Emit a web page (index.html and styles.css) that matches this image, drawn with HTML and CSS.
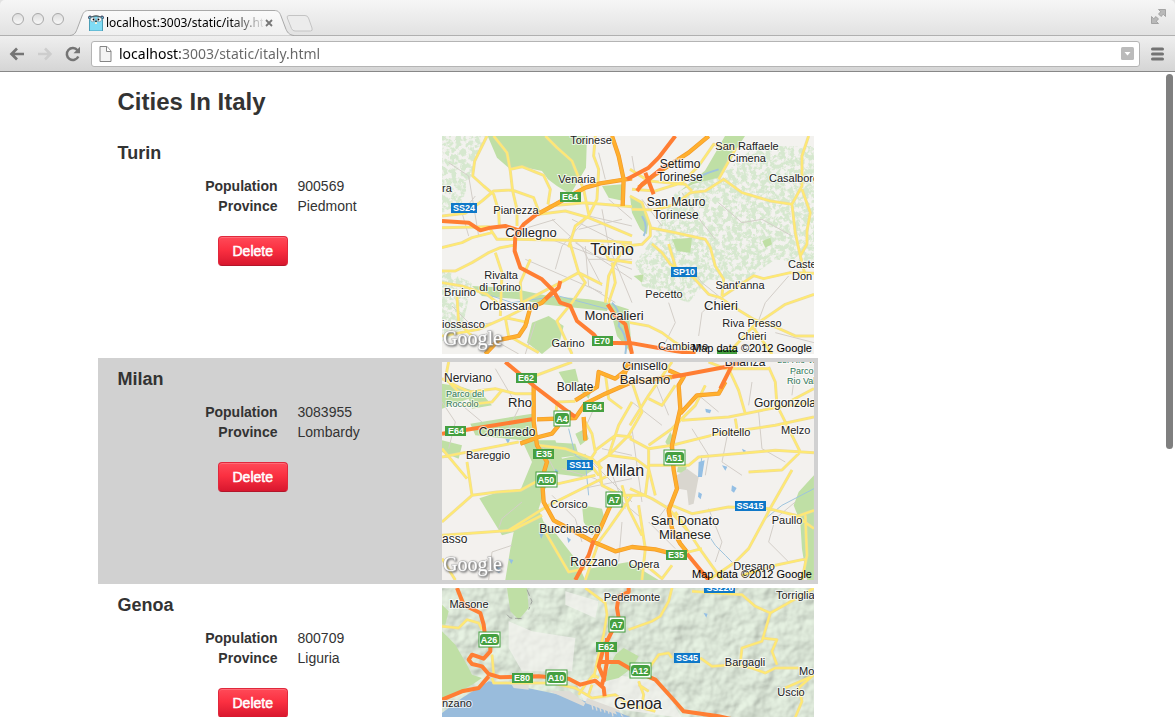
FILE: index.html
```html
<!DOCTYPE html>
<html lang="en">
<head>
<meta charset="utf-8">
<title>Cities In Italy</title>
<link rel="stylesheet" href="styles.css">
</head>
<body>
<header class="browser">
  <div class="tabstrip">
    <div class="lights"><i></i><i></i><i></i></div>
    <div class="tab">
      <svg class="tab-shape" width="224" height="26" viewBox="0 0 224 26"><defs><linearGradient id="tabfill" x2="0" y2="1"><stop offset="0" stop-color="#fafafa"/><stop offset="1" stop-color="#efefef"/></linearGradient></defs><path d="M0 25.5C5 25 6 22 7.500 18L12 6C13.500 2 15 .5 19 .5H204C208 .5 209.500 2 211 6L215.500 18C217 22 219 25 224 25.500" fill="url(#tabfill)" stroke="#a9a9a9"/></svg>
      <div class="tab-body">
        <svg width="16" height="16" viewBox="0 0 16 16"><circle cx="2" cy="2.500" r="1.500" fill="#68c4dc" stroke="#335"/><circle cx="14" cy="2.500" r="1.500" fill="#68c4dc" stroke="#335"/><path d="M1.500 16V5C1.500 0 14.500 0 14.500 5V16Z" fill="#7fdcf5" stroke="#4c9fb8"/><path d="M2 3.500C4 0 12 0 14 3.500" fill="none" stroke="#444"/><circle cx="4.800" cy="4.500" r="2.300" fill="#fff" stroke="#678" stroke-width=".5"/><circle cx="11.200" cy="4.500" r="2.300" fill="#fff" stroke="#678" stroke-width=".5"/><circle cx="5.500" cy="4.500" r=".9"/><circle cx="10.500" cy="4.500" r=".9"/><ellipse cx="8" cy="6.300" rx="1.200" ry=".7" fill="#333"/><path d="M7 7.300H9V9H7Z" fill="#fff0d0"/></svg>
        <span class="tab-title">localhost:3003/static/italy.html</span>
        <button class="icon-button" aria-label="Close tab"><svg width="8" height="8" viewBox="0 0 8 8"><path d="M1 1L7 7M7 1L1 7" stroke="#777" stroke-width="1.800"/></svg></button>
      </div>
    </div>
    <button class="icon-button new-tab" aria-label="New tab"><svg width="28" height="17" viewBox="0 0 28 17"><path d="M3 .5H19Q21.500 .5 22.500 3L26 13Q27 16 24.500 16H9Q6.500 16 5.500 13.500L1.300 3Q.5 .5 3 .5Z" fill="#ececec" stroke="#c4c4c4"/></svg></button>
    <button class="icon-button fullscreen" aria-label="Full screen"><svg width="15" height="15" viewBox="0 0 15 15"><path d="M7.500 .5H14.500V7.500L12.300 5.300L10 7.500L7.500 5L9.700 2.700ZM.5 7.500L2.700 9.700L5 7.500L7.500 10L5.300 12.300L7.500 14.500H.5Z" fill="#b9b9b9" stroke="#8f8f8f" stroke-width=".7"/></svg></button>
  </div>
  <div class="toolbar">
    <button class="icon-button" aria-label="Back"><svg width="16" height="14" viewBox="0 0 16 14"><path d="M15 7H3M8 1.500L2.500 7L8 12.500" fill="none" stroke="#757575" stroke-width="2.700"/></svg></button>
    <button class="icon-button" aria-label="Forward" disabled><svg width="16" height="14" viewBox="0 0 16 14"><path d="M1 7H13M8 1.500L13.500 7L8 12.500" fill="none" stroke="#cdcdcd" stroke-width="2.500"/></svg></button>
    <button class="icon-button" aria-label="Reload"><svg width="16" height="16" viewBox="0 0 16 16"><path d="M13.300 10.500A6 6 0 1 1 12.500 4.200" fill="none" stroke="#757575" stroke-width="2.500"/><path d="M15 .8V7.300H8.500Z" fill="#757575"/></svg></button>
    <div class="omnibox">
      <svg width="13" height="16" viewBox="0 0 13 16"><path d="M1 .5H8L12 5V15.500H1Z" fill="#f3f3f3" stroke="#858585"/><path d="M7.500 .5V5.500H12" fill="#fff" stroke="#858585"/></svg>
      <input class="address" type="text" aria-label="Address" value="localhost:3003/static/italy.html">
      <button class="icon-button" aria-label="Show history"><svg width="13" height="13" viewBox="0 0 13 13"><rect width="13" height="13" rx="1.500" fill="#bbb"/><path d="M3.500 5H9.500L6.500 8.500Z" fill="#fff"/></svg></button>
    </div>
    <button class="icon-button" aria-label="Menu"><svg width="13" height="14" viewBox="0 0 13 14"><path d="M1.500 2H11.500M1.500 7H11.500M1.500 12H11.500" stroke="#737373" stroke-width="3" stroke-linecap="round"/></svg></button>
  </div>
</header>
<main class="viewport">
  <div class="container">
    <h1>Cities In Italy</h1>

    <section class="city">
      <div class="details">
        <h2>Turin</h2>
        <dl><dt>Population</dt><dd>900569</dd><dt>Province</dt><dd>Piedmont</dd></dl>
        <button class="delete">Delete</button>
      </div>
      <svg class="map" viewBox="0 0 372 218" role="img" aria-label="Map of Turin">
        <defs>
          <filter id="hills" x="0" y="0" width="100%" height="100%" color-interpolation-filters="sRGB"><feTurbulence type="fractalNoise" baseFrequency=".07" numOctaves="4" seed="4"/><feColorMatrix values="0 0 0 0 .84  0 0 0 0 .91  0 0 0 0 .81  6 0 0 0 -2.400"/><feComposite in2="SourceGraphic" operator="in"/></filter>
          <filter id="relief" x="0" y="0" width="100%" height="100%" color-interpolation-filters="sRGB"><feTurbulence type="fractalNoise" baseFrequency=".05" numOctaves="3" seed="9"/><feColorMatrix values="0 0 0 0 0  0 0 0 0 0  0 0 0 0 0  1 0 0 0 0"/><feDiffuseLighting surfaceScale="2" diffuseConstant="1.050" lighting-color="#dfeadb"><feDistantLight azimuth="225" elevation="68"/></feDiffuseLighting></filter>
          <path id="turin-roads" d="M135 0L98 75L92 120L125 150L155 175L170 225L172 270M155 0L195 50L205 105L212 165L225 220V270M205 100L240 92L280 108L305 118L325 160L318 205M0 240L70 232L120 195L155 165L210 162L275 185L290 225M310 0L345 35L390 75L400 100L425 160L440 235M0 275L140 272L165 310H220L480 315L570 320M0 335L60 320L90 305L150 290M290 235L370 225L440 245L570 300M320 210L430 200L570 212M460 0L455 60L470 100L465 190L440 240L400 270L380 334M0 405H40L90 380L140 350L175 335L215 328M160 350L180 410L175 540M265 370L235 440L240 520L190 545L200 600L290 650M0 440L60 450L135 475L165 500M45 480L50 560L90 600M240 500L355 440L410 410L480 445M385 324L410 410L430 440L390 500L345 555L390 654M564 180L600 200L625 270V300L600 325L550 330L520 380L500 420L490 500M480 324L500 370L570 380M625 275L700 290L790 310L805 334L820 390L845 430L840 480M1100 0L1080 60V150L1050 205L985 195L900 170L845 130L790 165L745 170L700 205L640 222L570 220M1050 205L1060 290L1075 360L1090 420M1080 160L1105 230L1095 285V324L1075 360M570 160L640 165L720 140L770 90L815 25L880 40L830 130M564 100L620 135L730 145L750 165M630 324L660 350L685 385L755 425L800 475L835 485L870 510L935 550L1005 575L1060 600L1116 600M680 324L700 390M840 482L935 419L965 428L1045 410L1116 412M1116 475L1030 505L935 570L870 640M930 570L990 654M564 560L620 570L660 590L700 620L760 654M0 600L110 580L190 545L260 560M500 500L520 440L510 380M540 324L570 350"/>
          <path id="turin-highways" d="M285 235L340 205L430 155L475 142L570 127M510 0L530 60L545 130L542 210M330 470L300 500L265 515L250 570L230 600L170 612L130 654M800 0L740 50L640 115L590 155"/>
        </defs>
        <rect width="372" height="218" fill="#f3f2ef"/>
        <g transform="scale(.3333)">
          <g filter="url(#hills)"><path d="M700 170L860 100L940 30H1116V390L1000 370L900 440L800 430L740 500L600 450L580 380L630 310Z"/><path d="M0 0H130L90 110L60 200L0 230Z"/><path d="M0 400L90 440L60 580L0 620Z"/></g>
          <g class="park"><path d="M137 0H435L432 95L400 150L385 175L345 150L318 130L300 105L240 92L205 100L165 65Z"/><path d="M480 150L540 145L545 195L500 185Z"/><path d="M849 0H909L874 54L834 124L754 144L714 165L789 104L824 44Z"/><path d="M270 560L320 540L365 570L355 610L300 654L255 620Z"/><path d="M90 450L200 455L320 480L440 490L500 500L495 525L400 515L300 505L230 490L120 480Z"/><path d="M564 180L600 200L620 250L615 295L595 280L570 230ZM500 500L560 520L570 654L525 600Z"/><path d="M690 310L750 305L745 350L705 345ZM961 315L985 305L990 325L970 335ZM575 420L605 415L600 440Z"/></g>
          <path class="grid" d="M330 250L420 334L480 450M300 300L570 400M250 370L480 470M400 320L570 430M480 220L500 330L570 500M390 250L570 340M340 400L360 330L440 240L570 270M470 50L490 130M570 60L580 120M430 330L440 450L520 500M600 190L660 270M100 180L60 230L80 300M20 80L80 120L110 300M240 280L340 250M410 280L540 250M500 190L570 250M440 370L570 370M750 400L780 440L830 480L780 530L770 600M1040 420L970 500L940 580M680 500L700 560L670 620M830 200L900 260L960 250L1050 300M720 170L780 260L820 310M170 620L230 654M30 510L90 570L150 560M280 560L250 654M1000 590L1116 620"/>
          <path class="river" d="M600 240Q620 270 605 300M830 100L800 110L740 135M510 500Q540 530 530 570Q560 600 550 654"/>
          <path class="river thin" d="M0 440L60 450L210 500L350 480L500 520"/>
          <use href="#turin-roads" class="minor-edge"/><use href="#turin-roads" class="minor"/>
          <use href="#turin-highways" class="major-edge"/><use href="#turin-highways" class="major"/>
          <path class="motorway" d="M0 255L80 260L115 283L145 275L190 270L235 285M290 230L245 265L220 300L218 345L235 395L300 430L335 465L355 500L385 510L405 555L455 595L475 620L570 622M355 435L350 455L310 490M555 130L620 95L650 65L700 0M585 165L600 145L650 105L680 85M610 110L635 175M497 505L520 540L550 565L564 625L570 654M560 620L700 645L760 654"/>
        </g>
        <g class="label">
          <text x="149" y="8">Torinese</text><text x="135" y="47">Venaria</text><text class="start" x="0" y="56">ra</text><text x="74" y="78">Pianezza</text><text class="town" x="89" y="101">Collegno</text><text class="capital" x="170" y="119">Torino</text><text x="305" y="14">San Raffaele</text><text x="305" y="26">Cimena</text><text class="village" x="238" y="32">Settimo</text><text class="village" x="238" y="45">Torinese</text><text class="start" x="327" y="46">Casalborgone</text><text class="village" x="234" y="70">San Mauro</text><text class="village" x="234" y="83">Torinese</text><text x="59" y="143">Rivalta</text><text x="58" y="155">di Torino</text><text x="18" y="160">Bruino</text><text class="village" x="67" y="174">Orbassano</text><text class="start" x="0" y="192">iossasco</text><text class="town" x="172" y="184">Moncalieri</text><text x="126" y="211">Garino</text><text x="222" y="162">Pecetto</text><text x="298" y="153">Sant'anna</text><text class="town" x="279" y="174">Chieri</text><text class="start" x="346" y="132">Castelnuovo</text><text class="start" x="350" y="144">Don Bosco</text><text x="310" y="191">Riva Presso</text><text x="310" y="204">Chieri</text><text x="241" y="214">Cambiano</text>
        </g>
        <g class="green"><rect x="118" y="56" width="21" height="10"/><rect x="150" y="200" width="21" height="10"/><rect x="275" y="214" width="20" height="10"/></g>
        <g class="blue"><rect x="9" y="67" width="26" height="10"/><rect x="229" y="131" width="26" height="10"/></g>
        <g class="shield"><text x="128" y="64">E64</text><text x="160" y="208">E70</text><text x="22" y="75">SS24</text><text x="242" y="139">SP10</text></g>
        <text class="google" x="1" y="209">Google</text><text class="credit" x="370" y="216">Map data ©2012 Google</text>
      </svg>
    </section>

    <section class="city alternate">
      <div class="details">
        <h2>Milan</h2>
        <dl><dt>Population</dt><dd>3083955</dd><dt>Province</dt><dd>Lombardy</dd></dl>
        <button class="delete">Delete</button>
      </div>
      <svg class="map" viewBox="0 0 372 218" role="img" aria-label="Map of Milan">
        <defs>
          <path id="milan-roads" d="M0 50L80 90L160 80L220 95L270 95M60 130L150 120L180 85M0 260L75 350M0 285L230 240M290 250L370 260L450 290L480 320M75 300L90 400L0 480M90 400L165 390L235 385L290 355L350 365L460 340M0 520L210 505L300 460M200 505L320 430L460 360L500 340M310 510L380 630L430 620M0 590L40 654M340 180L345 120L400 118M460 265L520 220L570 225M430 180L450 215L460 270L440 300L470 340M490 35L500 110L540 140M470 300L500 280L580 290L620 320L610 400L540 400L480 370ZM564 190L620 100L690 0M570 60L600 150L560 220L500 280M620 250L690 200L760 130L790 70M620 110L660 130L700 70M720 175L860 165L1010 135L1116 120M620 260L690 250L830 215L1000 190L1116 165M620 310H740L770 285L1000 265L1116 272M860 20L890 85L910 155M980 15L1000 60L1005 130L1040 200L1075 270L1020 324L920 330M1116 80L1040 120M880 170L885 200M564 230L620 260V320L640 400M690 430L750 455L860 435L980 440L1060 460L1116 500M1050 324L990 430L920 560L880 600L800 654M564 380L630 410L680 440L740 510M700 450L780 570L840 654M590 430L610 560L600 654M1090 460L1095 580L1080 654M1116 445L1060 465M1095 590L1000 610L900 640M570 400L500 500L470 540L430 654M540 370L560 440L600 520M20 0L10 50L50 90M800 0L850 20L980 20M690 610L660 650L600 600M720 575L780 560M270 45L390 0M500 280L530 190L570 120"/>
          <path id="milan-highways" d="M275 70V180L285 250L315 300L300 350L305 420L335 475L400 510L455 540L520 568L570 555L640 562L690 575L735 575M285 172L400 168L430 125L490 95L570 60L690 45M425 165L430 235M235 245L290 225L330 215L350 190M570 10L520 50L470 30L465 75L400 115M560 0L540 60M715 155L765 100L830 95L850 60M680 25L725 45L710 70L715 140L690 250L695 324L705 380L680 445L690 500L715 545L735 570M510 420L475 500L455 535"/>
        </defs>
        <rect width="372" height="218" fill="#f3f1ee"/>
        <g transform="scale(.3333)">
          <g class="park"><path d="M85 185L270 155V235L340 235L360 290L430 275L460 320L420 345L340 335L310 380L290 440L305 480L330 500L400 590L430 654H190L205 560L215 510L180 520L112 409L170 390L235 385L270 300L240 235L100 220Z"/><path d="M0 65L60 75L120 95L150 130L90 140L80 110L0 140ZM0 235L60 250L50 290L0 270Z"/><path d="M310 240L400 245L410 280L330 290ZM350 30L400 20L410 60L370 65ZM400 215L430 200L440 230L415 250Z"/><path d="M1055 430L1070 390L1116 340V654H1095L1080 560L1075 480Z"/><path d="M420 430L480 440L490 480L450 520L425 480ZM440 620L560 600L650 654H430Z"/><path d="M685 210L700 240L690 270L670 240ZM710 300L735 310L730 335L705 330ZM400 70L450 80L440 110Z"/></g>
          <path d="M705 340L735 320L770 345L755 425L740 430L735 385L710 380Z" fill="#d9d6cf"/>
          <path class="grid" d="M300 250L340 330M360 320L460 350L600 470M420 380L570 350M500 310L550 440M440 290L570 420M330 400L400 470L420 540M480 260L570 280M570 200L600 420M460 130L420 220M0 120L40 180L20 260M160 20L230 140L200 200M570 120L660 190M640 60L680 160M750 200L800 280L790 340M860 200L840 300L900 340M950 150L960 260L1030 300M1060 420L1000 470L980 540L1040 600M800 440L840 540L820 600M700 400L640 480M210 550L150 570L140 654M240 420L180 470L170 500M770 100L830 150M930 60L920 130M1060 20L1050 100M60 130L120 180M540 480L530 600M620 480L700 560"/>
          <path class="river thin" d="M775 324L780 280M800 520L820 550L850 580L870 600M970 470L1020 430L1116 380M380 200L400 280L430 300L440 400"/>
          <g class="pond"><path d="M770 300L788 295L780 345L768 345ZM790 140l18 4l-4 10l-12-3zM870 370l14 8l-8 14l-8-6zM770 390l10 6l-4 16l-8-8zM840 310l16 4l-6 12zM900 260l12 6l-6 10zM290 510l14 6l-6 14zM375 525l12 8l-8 10zM160 610l16 8l-4 16l-12-8zM200 590l14 4l-6 12zM340 320l10 8l-12 8zM190 230l14 2l-6 14z"/></g>
          <use href="#milan-roads" class="minor-edge"/><use href="#milan-roads" class="minor"/>
          <use href="#milan-highways" class="major-edge"/><use href="#milan-highways" class="major"/>
          <path class="motorway" d="M190 0L280 75L365 140L400 165M0 215L270 172M690 45L850 15L900 0M870 10L845 60L835 80M455 535L440 580L400 654M735 575L800 654"/>
        </g>
        <g class="label">
          <text class="village" x="26" y="20">Nerviano</text><text class="town" x="78" y="45">Rho</text><text class="village" x="133" y="29">Bollate</text><text class="village" x="65" y="74">Cornaredo</text><text x="46" y="97">Bareggio</text><text class="capital" x="183" y="114">Milan</text><text class="village" x="203" y="8">Cinisello</text><text class="town" x="203" y="22">Balsamo</text><text class="village" x="303" y="4">Brianza</text><text class="village start" x="312" y="45">Gorgonzola</text><text x="289" y="74">Pioltello</text><text class="start" x="339" y="72">Melzo</text><text x="127" y="146">Corsico</text><text class="village" x="128" y="171">Buccinasco</text><text class="village start" x="0" y="181">asso</text><text class="village" x="152" y="204">Rozzano</text><text x="202" y="206">Opera</text><text class="town" x="243" y="163">San Donato</text><text class="town" x="243" y="177">Milanese</text><text x="345" y="162">Paullo</text><text x="312" y="208">Dresano</text>
          <g class="nature"><text x="4" y="35">Parco del</text><text x="4" y="45">Roccolo</text><text x="335" y="1">del Rio Vallone</text><text x="348" y="12">Parco</text><text x="345" y="22">Rio Vallone</text></g>
        </g>
        <g class="green"><rect x="74" y="11" width="21" height="10"/><rect x="141" y="40" width="21" height="10"/><rect x="3" y="64" width="21" height="10"/><rect x="91" y="87" width="21" height="10"/><rect x="224" y="188" width="21" height="10"/></g>
        <g class="blue"><rect x="125" y="98" width="26" height="10"/><rect x="293" y="139" width="31" height="10"/></g>
        <g class="auto"><rect x="112" y="49" width="16" height="15"/><rect x="222" y="88" width="21" height="15"/><rect x="94" y="110" width="21" height="15"/><rect x="164" y="130" width="16" height="15"/></g>
        <g class="auto-fill"><rect x="113" y="51" width="14" height="11" rx="3"/><rect x="223" y="90" width="19" height="11" rx="3"/><rect x="95" y="112" width="19" height="11" rx="3"/><rect x="165" y="132" width="14" height="11" rx="3"/></g>
        <g class="shield"><text x="84" y="19">E62</text><text x="152" y="48">E64</text><text x="14" y="72">E64</text><text x="102" y="95">E35</text><text x="234" y="196">E35</text><text x="138" y="106">SS11</text><text x="308" y="147">SS415</text><text x="120" y="60">A4</text><text x="232" y="99">A51</text><text x="104" y="121">A50</text><text x="172" y="141">A7</text></g>
        <text class="google" x="1" y="209">Google</text><text class="credit" x="370" y="216">Map data ©2012 Google</text>
      </svg>
    </section>

    <section class="city">
      <div class="details">
        <h2>Genoa</h2>
        <dl><dt>Population</dt><dd>800709</dd><dt>Province</dt><dd>Liguria</dd></dl>
        <button class="delete">Delete</button>
      </div>
      <svg class="map" viewBox="0 0 372 218" role="img" aria-label="Map of Genoa">
        <defs>
          <path id="genoa-roads" d="M0 115L50 120L75 95L110 105L120 125M430 0L490 45L495 80L485 140L470 200L455 270M560 125L630 100L655 85L680 40L690 0M625 235L650 200L680 195L690 210M775 210L810 235L880 230L930 240L970 255L1000 240L1070 240M750 10L900 20L940 55L985 75L1030 50L1116 0M985 75L960 160L900 180L895 225M960 150L1005 155L990 190L1005 230M1116 260L1070 300L1080 340L1060 388M1110 265L1030 300M150 270L155 285L220 285L330 285L400 300L450 330L520 320L560 350L640 370M590 280L605 320L600 350M590 290L620 310M150 200L155 260M410 320L430 290L455 260L470 270M440 320L450 290"/>
        </defs>
        <rect width="372" height="218" fill="#e3ecdf"/>
        <rect width="372" height="218" filter="url(#relief)"/>
        <g transform="scale(.3333)">
          <path d="M200 100L270 130L400 150L390 250L240 250L200 180ZM370 10L470 40L460 90L370 50ZM400 280L520 260L640 280L690 340L720 390L430 350Z" fill="#f3f2f0" opacity=".7"/>
          <g class="park"><path d="M195 0H255L260 60L230 95L205 70ZM0 130L40 170L75 230L90 260L120 270L90 290L0 340ZM520 200L545 180L590 205L570 240L530 270L490 280L500 240ZM0 50L20 70L10 110L0 110Z"/></g>
          <path d="M255 5L270 40L260 65M195 80L205 90L240 92" fill="none" stroke="#888" stroke-width="2" stroke-dasharray="20 8"/>
          <path d="M0 375L60 330L140 280L210 290L400 330L520 370L600 400L640 440L900 520L1116 600V654H0Z" fill="#99bcdc"/>
          <path d="M205 283L260 290V305L215 300ZM320 308L385 310L430 345L425 355ZM435 330L530 365L545 387L430 345Z" fill="#dedcd6"/><path d="M450 350l3 15m8-12l4 15m8-13l4 16m8-13l4 16m8-13l4 16m8-10l4 18" stroke="#dedcd6" stroke-width="4"/>
          <g class="pond"><path d="M785 75l12 2l-4 12zM520 370l15 5l5 15h-10z"/></g>
          <use href="#genoa-roads" class="minor-edge"/><use href="#genoa-roads" class="minor"/>
          <path class="motorway" d="M45 0L65 50L115 75L125 110L130 150L145 165V190L125 212L90 200L80 215L90 228L120 235L140 258L175 268L290 265L380 272L415 290L460 278L485 300L488 325M0 335L60 310L110 300L140 265M560 0V12L530 25L525 60L530 90L505 140L485 180L470 235L485 270L480 290M495 150V220L485 280M475 222H530L570 245L640 275L690 330L725 370L830 385L900 400"/>
        </g>
        <g class="label">
          <text x="27" y="20">Masone</text><text x="190" y="13">Pedemonte</text><text class="start" x="334" y="11">Torriglia</text><text x="303" y="78">Bargagli</text><text class="start" x="357" y="87">Moconesi</text><text x="349" y="108">Uscio</text><text class="start" x="0" y="119">nzano</text><text class="capital" x="196" y="121">Genoa</text>
        </g>
        <g class="green"><rect x="154" y="54" width="21" height="10"/><rect x="70" y="85" width="21" height="10"/></g>
        <g class="blue"><rect x="262" y="-5" width="31" height="10"/><rect x="232" y="65" width="26" height="10"/></g>
        <g class="auto"><rect x="167" y="29" width="16" height="15"/><rect x="37" y="44" width="21" height="15"/><rect x="188" y="75" width="21" height="15"/><rect x="104" y="82" width="21" height="15"/></g>
        <g class="auto-fill"><rect x="168" y="31" width="14" height="11" rx="3"/><rect x="38" y="46" width="19" height="11" rx="3"/><rect x="189" y="77" width="19" height="11" rx="3"/><rect x="105" y="84" width="19" height="11" rx="3"/></g>
        <g class="shield"><text x="164" y="62">E62</text><text x="80" y="93">E80</text><text x="278" y="3">SS226</text><text x="245" y="73">SS45</text><text x="175" y="40">A7</text><text x="47" y="55">A26</text><text x="198" y="86">A12</text><text x="114" y="93">A10</text></g>
      </svg>
    </section>
  </div>
  <div class="scroll-thumb"></div>
</main>
</body>
</html>
```
FILE: styles.css
```css
* { box-sizing: border-box; }
body {
  margin: 0;
  height: 100vh;
  display: flex;
  flex-direction: column;
  overflow: hidden;
  background: #fff;
  color: #333;
  font: 14px/20px "Liberation Sans", Arial, sans-serif;
}
svg { display: block; flex: none; }
.icon-button { padding: 0; border: 0; background: none; flex: none; }

/* Browser window */
.browser { flex: none; background: #e2e2e2; font-family: "Noto Sans", sans-serif; }
.tabstrip {
  height: 36px;
  display: flex;
  align-items: flex-end;
  background: linear-gradient(#f6f6f6, #e2e2e2);
  border-bottom: 1px solid #b0b0b0;
  border-radius: 5px 5px 0 0;
}
.lights { display: flex; gap: 8px; padding: 0 6px 10px 12px; }
.lights i {
  width: 12px;
  height: 12px;
  border: 1px solid #a8a8a8;
  border-radius: 50%;
  background: linear-gradient(#dedede, #f8f8f8);
}
.tab { display: grid; margin-bottom: -1px; }
.tab-shape, .tab-body { grid-area: 1 / 1; }
.tab-body { display: flex; align-items: center; gap: 2px; padding: 0 16px 0 18px; width: 224px; }
.tab-title {
  flex: 1;
  min-width: 0;
  overflow: hidden;
  white-space: nowrap;
  font-size: 12px;
  line-height: 16px;
  color: transparent;
  background: linear-gradient(to right, #000 125px, #0000 160px);
  -webkit-background-clip: text;
  background-clip: text;
}
.tab .icon-button { margin-right: 5px; }
.new-tab { margin: 0 auto 3px -8px; }
.fullscreen { margin: 0 9px 11px 0; }
.toolbar {
  height: 36px;
  display: flex;
  align-items: center;
  gap: 12px;
  padding: 0 11px 0 9px;
  background: linear-gradient(#efefef, #d5d5d5);
  border-bottom: 1px solid #888;
}
.omnibox {
  flex: 1;
  height: 26px;
  display: flex;
  align-items: center;
  gap: 7px;
  padding: 0 5px 0 7px;
  margin-left: -2px;
  margin-right: -1px;
  border: 1px solid #b4b4b4;
  border-radius: 3px;
  background: #fff;
}
.address {
  flex: 1;
  min-width: 0;
  padding: 0;
  border: 0;
  outline: 0;
  font: 14px/20px "Noto Sans", sans-serif;
  color: transparent;
  background: linear-gradient(to right, #000 61px, #666 61px);
  -webkit-background-clip: text;
  background-clip: text;
}

/* Page */
.viewport { position: relative; flex: 1; min-height: 0; overflow: hidden; }
.scroll-thumb {
  position: absolute;
  top: 2px;
  right: 2px;
  width: 7px;
  height: 375px;
  border-radius: 4px;
  background: #7f7f7f;
}
.container { max-width: 940px; margin: 0 auto; }
h1 { margin: 0; font-size: 24px; line-height: 60px; }
.city {
  display: flex;
  justify-content: space-between;
  max-width: 720px;
  margin-left: -20px;
  padding: 4px 4px 4px 20px;
}
.alternate { background: #d1d1d1; }
h2 { margin: 0 0 6px; font-size: 18px; line-height: 34px; }
dl { display: grid; grid-template-columns: 160px 1fr; column-gap: 20px; margin: 0 0 20px; }
dt { font-weight: bold; text-align: right; }
dd { margin: 0; }
.delete {
  height: 30px;
  margin-left: 100px;
  padding: 0 14px;
  border: 1px solid #e0283c;
  border-bottom-color: #b3152a;
  border-radius: 4px;
  background: linear-gradient(#ff4a58, #fb3041 45%, #d8172e);
  box-shadow: inset 0 1px 0 #ff6b76;
  color: #fff;
  font: 14px/20px "Liberation Sans", Arial, sans-serif;
  -webkit-text-stroke: 0.5px #fff;
}

/* Maps */
.map { width: 372px; height: 218px; overflow: hidden; }
.park { fill: #bfdfa5; }
.pond { fill: #94bfe4; }
.river { fill: none; stroke: #9fc4dd; stroke-width: 6; }
.river.thin { stroke-width: 3; }
.grid { fill: none; stroke: #d3cec8; stroke-width: 3; }
.minor-edge, .minor, .major-edge, .major, .motorway { fill: none; stroke-linejoin: round; }
.minor-edge { stroke: #efdc98; stroke-width: 9; }
.minor { stroke: #ffea70; stroke-width: 5; }
.major-edge { stroke: #f39a2c; stroke-width: 13; }
.major { stroke: #ffb02e; stroke-width: 9; }
.motorway { stroke: #ff7e33; stroke-width: 12; }
.label text {
  fill: #222;
  font-size: 11px;
  text-anchor: middle;
  paint-order: stroke;
  stroke: #ffffffb0;
  stroke-width: 2px;
}
.label .village { font-size: 12px; }
.label .town { font-size: 13px; }
.label .capital { font-size: 16px; }
.label .start { text-anchor: start; }
.label .nature text { fill: #2f7555; font-size: 9px; text-anchor: start; }
.green { fill: #45a041; }
.blue { fill: #0f78c8; }
.auto { fill: #fff; stroke: #45a041; }
.auto-fill { fill: #45a041; }
.shield text { fill: #fff; font-size: 9px; font-weight: bold; text-anchor: middle; }
.google {
  font: 20px "Liberation Serif", serif;
  fill: #fff;
  stroke: #b5b5b5;
  stroke-width: 1px;
  paint-order: stroke;
  filter: drop-shadow(1px 1px 1px #666);
}
.credit { font-size: 11px; fill: #000; text-anchor: end; }
```
